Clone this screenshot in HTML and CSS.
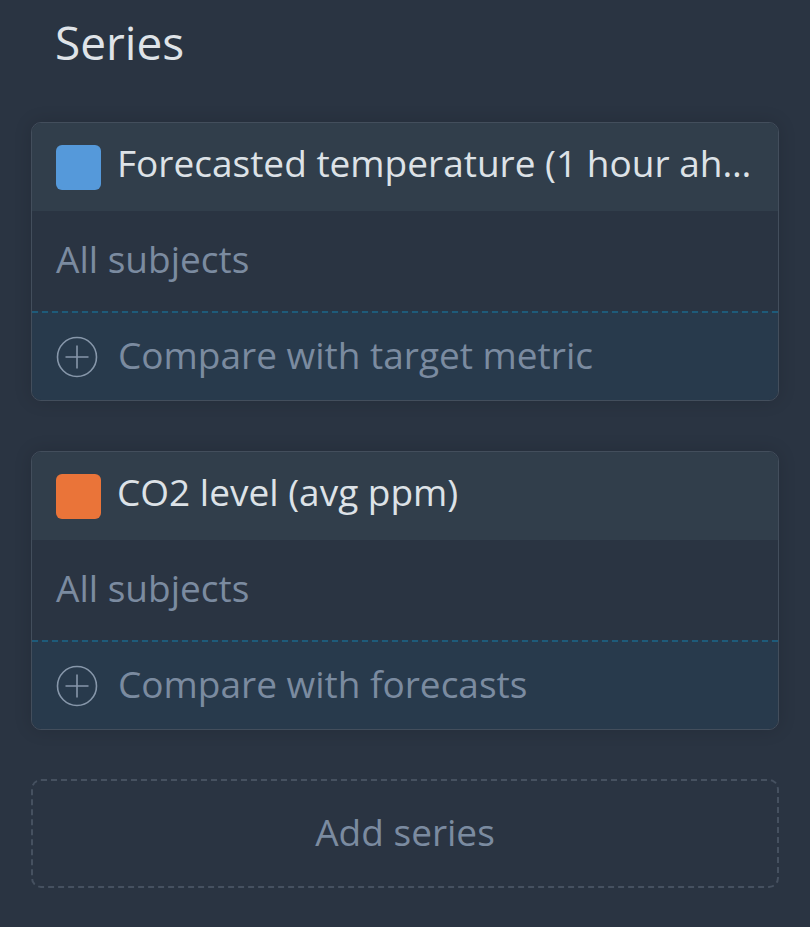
FILE: index.html
```html
<!DOCTYPE html>
<html lang="en">
<head>
    <meta charset="UTF-8">
    <meta name="viewport" content="width=device-width, initial-scale=1.0">
    <title>Series</title>
    <link rel="stylesheet" href="styles.css">
</head>
<body>
    <div class="panel">
        <h2 class="panel-title">Series</h2>

        <div class="series-card">
            <div class="series-head">
                <span class="swatch swatch-blue"></span>
                <span class="series-name">Forecasted temperature (1 hour ahead)</span>
            </div>
            <div class="series-subjects">All subjects</div>
            <div class="series-compare">
                <svg class="plus-icon" viewBox="0 0 42 42" width="42" height="42">
                    <circle cx="21" cy="21" r="19.5" fill="none" stroke="currentColor" stroke-width="1.6"/>
                    <path d="M21 9.5v23M9.5 21h23" stroke="currentColor" stroke-width="1.6"/>
                </svg>
                <span class="compare-label">Compare with target metric</span>
            </div>
        </div>

        <div class="series-card">
            <div class="series-head">
                <span class="swatch swatch-orange"></span>
                <span class="series-name">CO2 level (avg ppm)</span>
            </div>
            <div class="series-subjects">All subjects</div>
            <div class="series-compare">
                <svg class="plus-icon" viewBox="0 0 42 42" width="42" height="42">
                    <circle cx="21" cy="21" r="19.5" fill="none" stroke="currentColor" stroke-width="1.6"/>
                    <path d="M21 9.5v23M9.5 21h23" stroke="currentColor" stroke-width="1.6"/>
                </svg>
                <span class="compare-label">Compare with forecasts</span>
            </div>
        </div>

        <button class="add-series">Add series</button>
    </div>
</body>
</html>
```

FILE: styles.css
```css
body {
    margin: 0;
    background-color: #2a3442;
    font-family: "Open Sans", "Noto Sans", sans-serif;
    color: #dde2e7;
}
.panel {
    padding: 0 31px 40px;
}
.panel-title {
    margin: 0;
    padding: 12px 0 0 24px;
    height: 72px;
    font-size: 46px;
    font-weight: 400;
    line-height: 60px;
    color: #dfe3e8;
}
.series-card {
    margin-top: 50px;
    border: 1px solid #434e5c;
    border-radius: 10px;
    overflow: hidden;
    box-shadow: 0 0 18px rgba(0,0,0,0.14);
}
.panel-title + .series-card {
    margin-top: 38px;
}
.series-head {
    display: flex;
    align-items: center;
    gap: 16px;
    height: 88px;
    padding: 0 25px 0 24px;
    background-color: #313e4b;
}
.swatch {
    flex: none;
    width: 45px;
    height: 45px;
    border-radius: 6px;
}
.swatch-blue {
    background-color: #5599da;
}
.swatch-orange {
    background-color: #ea7439;
}
.series-name {
    font-size: 37px;
    line-height: 54px;
    margin-top: -8px;
    white-space: nowrap;
    overflow: hidden;
    text-overflow: ellipsis;
}
.series-subjects {
    display: flex;
    align-items: center;
    height: 95px;
    padding: 0 24px 5px;
    font-size: 37px;
    color: #7b8ba0;
}
.series-compare {
    display: flex;
    align-items: center;
    gap: 20px;
    height: 87px;
    padding: 0 24px;
    border-top: 2px dashed #1e5b7a;
    background-color: #283a4c;
    font-size: 37px;
    color: #7b8ba0;
}
.compare-label {
    margin-top: -5px;
}
.plus-icon {
    flex: none;
    color: #8797aa;
}
.add-series {
    display: block;
    width: 100%;
    height: 109px;
    margin-top: 49px;
    padding-bottom: 5px;
    border: 2px dashed #465160;
    border-radius: 10px;
    background: none;
    font-family: inherit;
    font-size: 37px;
    color: #7b8ba0;
    cursor: pointer;
}
```
